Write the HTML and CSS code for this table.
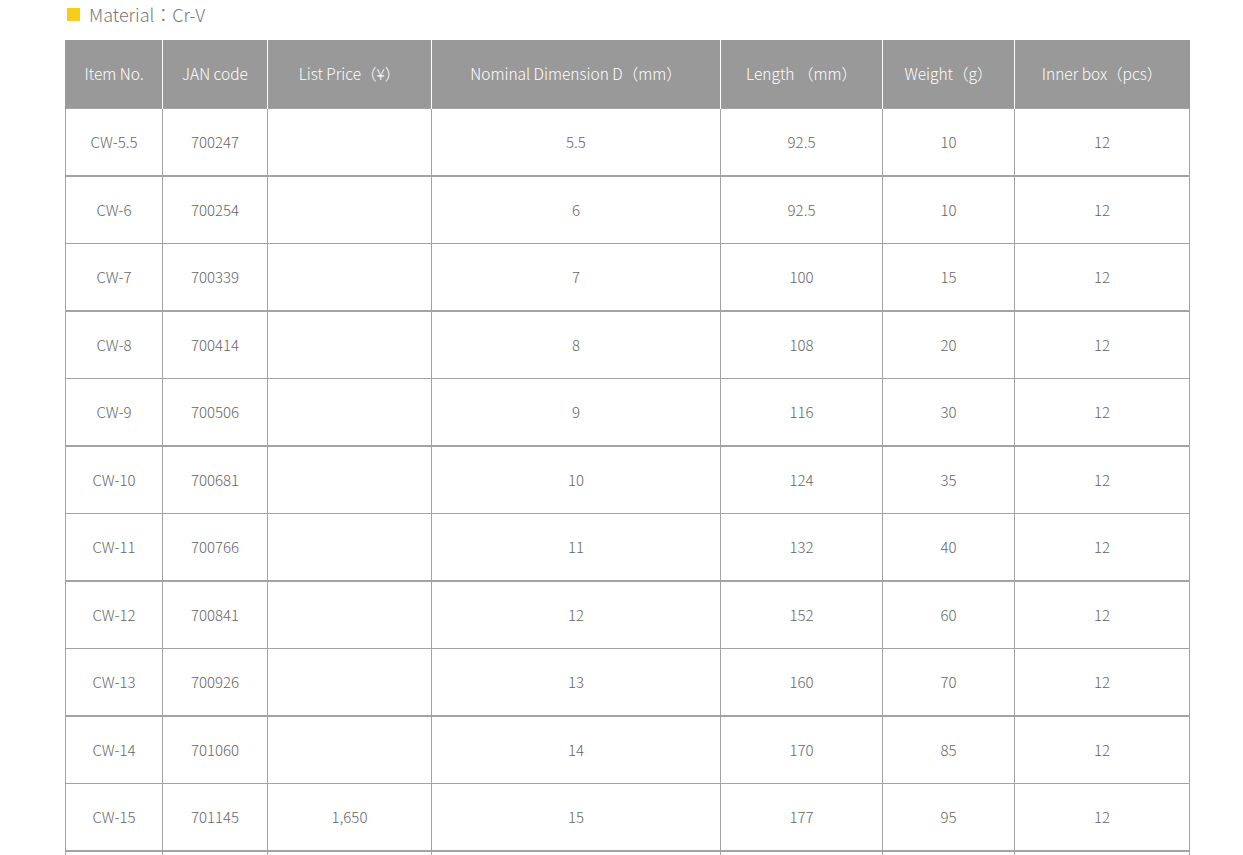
FILE: index.html
```html
<!DOCTYPE html>
<html lang="ja">
<head>
<meta charset="utf-8">
<link rel="stylesheet" href="styles.css">
</head>
<body>
<div class="page">
  <p class="material"><span class="mark"></span>Material：Cr-V</p>
  <table class="spec">
    <colgroup>
      <col class="c1"><col class="c2"><col class="c3"><col class="c4"><col class="c5"><col class="c6"><col class="c7">
    </colgroup>
    <thead>
      <tr>
        <th>Item No.</th><th>JAN code</th><th>List Price（¥）</th><th>Nominal Dimension D（mm）</th><th>Length （mm）</th><th>Weight（g）</th><th>Inner box（pcs）</th>
      </tr>
    </thead>
    <tbody>
      <tr class="odd"><td>CW-5.5</td><td>700247</td><td></td><td>5.5</td><td>92.5</td><td>10</td><td>12</td></tr>
      <tr><td>CW-6</td><td>700254</td><td></td><td>6</td><td>92.5</td><td>10</td><td>12</td></tr>
      <tr class="odd"><td>CW-7</td><td>700339</td><td></td><td>7</td><td>100</td><td>15</td><td>12</td></tr>
      <tr><td>CW-8</td><td>700414</td><td></td><td>8</td><td>108</td><td>20</td><td>12</td></tr>
      <tr class="odd"><td>CW-9</td><td>700506</td><td></td><td>9</td><td>116</td><td>30</td><td>12</td></tr>
      <tr><td>CW-10</td><td>700681</td><td></td><td>10</td><td>124</td><td>35</td><td>12</td></tr>
      <tr class="odd"><td>CW-11</td><td>700766</td><td></td><td>11</td><td>132</td><td>40</td><td>12</td></tr>
      <tr><td>CW-12</td><td>700841</td><td></td><td>12</td><td>152</td><td>60</td><td>12</td></tr>
      <tr class="odd"><td>CW-13</td><td>700926</td><td></td><td>13</td><td>160</td><td>70</td><td>12</td></tr>
      <tr><td>CW-14</td><td>701060</td><td></td><td>14</td><td>170</td><td>85</td><td>12</td></tr>
      <tr class="odd"><td>CW-15</td><td>701145</td><td>1,650</td><td>15</td><td>177</td><td>95</td><td>12</td></tr>
      <tr><td></td><td></td><td></td><td></td><td></td><td></td><td></td></tr>
    </tbody>
  </table>
</div>
</body>
</html>
```
FILE: styles.css
```css
html, body {
  margin: 0;
  padding: 0;
  background: #fff;
}
body {
  font-family: "Noto Sans CJK JP", "Noto Sans", sans-serif;
  color: #666;
}
.page {
  padding: 0 0 0 65px;
  width: 1124px;
}
.material {
  margin: 0;
  height: 40px;
  display: flex;
  align-items: center;
  padding: 0 0 12px 2px;
  box-sizing: border-box;
  font-size: 18px;
  font-weight: 300;
  color: #777;
  line-height: 1;
}
.mark {
  display: inline-block;
  width: 13px;
  height: 13px;
  background: #f5cd1a;
  margin-right: 9px;
}
.spec {
  border-collapse: collapse;
  width: 1124px;
  table-layout: fixed;
  font-size: 15px;
  font-weight: 300;
}
.c1 { width: 97px; }
.c2 { width: 105px; }
.c3 { width: 164px; }
.c4 { width: 289px; }
.c5 { width: 162px; }
.c6 { width: 132px; }
.c7 { width: 175px; }
.spec th {
  background: #999;
  color: #fff;
  font-weight: 300;
  font-size: 15.5px;
  height: 66px;
  padding: 0 0 2px;
  border-left: 1px solid #fff;
  border-right: 1px solid #fff;
  text-align: center;
}
.spec th:first-child { border-left: 1px solid #999; }
.spec th:last-child { border-right: 1px solid #999; }
.spec td {
  height: 64px;
  padding: 0 0 2px;
  border: 1px solid #a3a3a3;
  text-align: center;
  color: #666;
}
.spec tr.odd td {
  border-bottom: 2px solid #a3a3a3;
}
```
